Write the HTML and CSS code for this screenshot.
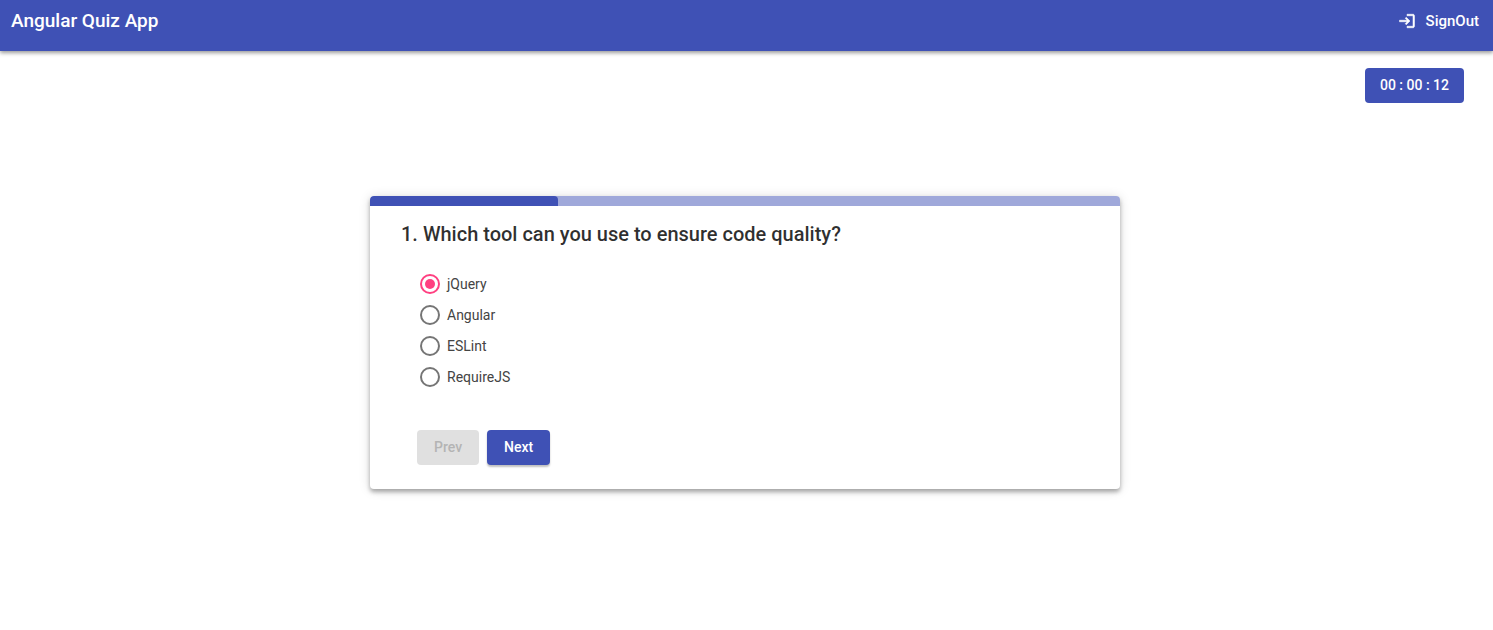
FILE: index.html
```
<!DOCTYPE html>
<html lang="en">
<head>
<meta charset="utf-8">
<meta name="viewport" content="width=device-width, initial-scale=1">
<title>Angular Quiz App</title>
<link rel="stylesheet" href="styles.css">
</head>
<body>
<header class="toolbar">
  <h1 class="brand">Angular Quiz App</h1>
  <button class="sign-out" type="button">
    <svg class="sign-out-icon" viewBox="0 0 24 24" aria-hidden="true"><path fill="currentColor" stroke="currentColor" stroke-width="0.7" d="M11 7 9.6 8.4l2.6 2.6H2v2h10.2l-2.6 2.6L11 17l5-5-5-5zm9 12h-8v2h8c1.1 0 2-.9 2-2V5c0-1.1-.9-2-2-2h-8v2h8v14z"/></svg>
    <span>SignOut</span>
  </button>
</header>
<main class="page">
  <button class="button timer" type="button">00 : 00 : 12</button>
  <form class="card">
    <div class="progress"><div class="progress-bar" style="width:25%"></div></div>
    <fieldset class="question">
      <legend class="title">1. Which tool can you use to ensure code quality?</legend>
      <div class="options">
        <label class="option"><input class="radio" type="radio" name="answer" checked><span>jQuery</span></label>
        <label class="option"><input class="radio" type="radio" name="answer"><span>Angular</span></label>
        <label class="option"><input class="radio" type="radio" name="answer"><span>ESLint</span></label>
        <label class="option"><input class="radio" type="radio" name="answer"><span>RequireJS</span></label>
      </div>
    </fieldset>
    <div class="actions">
      <button class="button" type="button" disabled>Prev</button>
      <button class="button raised" type="button">Next</button>
    </div>
  </form>
</main>
</body>
</html>
```
FILE: styles.css
```
* { box-sizing: border-box; }

body {
  margin: 0;
  background: #fff;
  color: rgba(0, 0, 0, 0.82);
  font-family: Roboto, "Liberation Sans", sans-serif;
  font-size: 14px;
}

.toolbar {
  display: flex;
  align-items: center;
  justify-content: space-between;
  padding: 0 14px 10px 11px;
  background: #3f51b5;
  color: #fff;
  box-shadow: 0 2px 4px rgba(0, 0, 0, 0.4);
}

.brand {
  margin: 0;
  font-size: 19px;
  font-weight: 500;
  line-height: 41px;
}

.sign-out {
  display: flex;
  align-items: center;
  gap: 10px;
  padding: 0;
  border: 0;
  background: none;
  color: inherit;
  font: 500 15px/20px Roboto, "Liberation Sans", sans-serif;
}

.sign-out-icon {
  width: 18px;
  height: 18px;
}

.page {
  display: flex;
  flex-direction: column;
  padding: 17px 29px 32px 26px;
}

.button {
  height: 35px;
  padding: 0 17px;
  border: 0;
  border-radius: 4px;
  background: #3f51b5;
  color: #fff;
  font: 500 14px/35px Roboto, "Liberation Sans", sans-serif;
}

.button:disabled {
  background: #e0e0e0;
  color: #b4b4b4;
}

.raised {
  box-shadow: 0 2px 2px rgba(0, 0, 0, 0.25);
}

.timer {
  align-self: flex-end;
  padding: 0 15px;
}

.card {
  width: 100%;
  max-width: 750px;
  margin: 93px auto 0;
  border-radius: 4px;
  box-shadow: 0 3px 4px rgba(0, 0, 0, 0.3), 0 1px 12px rgba(0, 0, 0, 0.14);
}

.progress {
  overflow: hidden;
  border-radius: 4px 4px 0 0;
  background: #9fa8da;
}

.progress-bar {
  height: 10px;
  border-radius: 4px 4px 0 0;
  background: #3f51b5;
}

.question {
  margin: 0;
  padding: 0 31px;
  border: 0;
}

.title {
  padding: 16px 0 0;
  font-size: 20px;
  font-weight: 500;
  line-height: 24px;
}

.options {
  display: flex;
  flex-direction: column;
  align-items: flex-start;
  padding: 22px 19px 0;
}

.option {
  display: flex;
  align-items: center;
  gap: 7px;
  height: 31px;
  color: #444;
}

.radio {
  appearance: none;
  display: grid;
  place-items: center;
  width: 20px;
  height: 20px;
  margin: 0;
  border: 2px solid #757575;
  border-radius: 50%;
  background: #fff;
}

.radio:checked { border-color: #ff4081; }

.radio:checked::before {
  content: "";
  width: 10px;
  height: 10px;
  border-radius: 50%;
  background: #ff4081;
}

.actions {
  display: flex;
  gap: 8px;
  padding: 38px 47px 24px;
}
```
